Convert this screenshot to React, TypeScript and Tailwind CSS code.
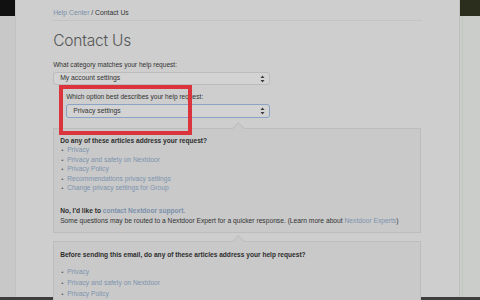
import React from 'react';

const font = { fontFamily: '"Liberation Sans", Arial, sans-serif' };

// Small up/down arrows of a native select
const SelectArrows = () => (
  <svg width="5" height="8" viewBox="0 0 5 8" className="shrink-0">
    <path d="M2.5 0.5 L4.5 3 L0.5 3 Z" fill="#3a3a3a" />
    <path d="M2.5 7.5 L4.5 5 L0.5 5 Z" fill="#3a3a3a" />
  </svg>
);

const Select = ({ value, focused }: { value: string; focused?: boolean }) => (
  <div
    className={`flex items-center justify-between rounded-[3px] bg-[#d3d3d3] pl-[6px] pr-[4px] text-[6.8px] text-[#333] ${
      focused
        ? 'h-[14px] border-[1.5px] border-[#8aa2c4]'
        : 'h-[13px] border border-[#bcbcbc]'
    }`}
  >
    <span>{value}</span>
    <SelectArrows />
  </div>
);

const LinkList = ({ items, gap }: { items: string[]; gap: string }) => (
  <ul className={`flex flex-col ${gap}`}>
    {items.map((item) => (
      <li key={item} className="flex items-center leading-[8px]">
        <span className="w-[7px] pl-[1px] text-[6px] text-[#555]">•</span>
        <span className="text-[#7d93ae]">{item}</span>
      </li>
    ))}
  </ul>
);

// Panel with the little notch pointing up at the select
const Panel = ({ children, className }: { children: React.ReactNode; className?: string }) => (
  <div className={`relative border border-[#bdbdbd] bg-[#c9c9c9] ${className ?? ''}`}>
    <div className="absolute -top-[5px] left-[180px] h-[9px] w-[9px] rotate-45 border-l border-t border-[#bdbdbd] bg-[#c9c9c9]" />
    <div className="relative px-[6px]">{children}</div>
  </div>
);

export default function App() {
  return (
    <div
      className="flex h-[300px] w-[480px] flex-col overflow-hidden bg-[#c9c9c9] text-[#333]"
      style={font}
    >
      <div className="flex min-h-0 flex-1">
        {/* left strip */}
        <div className="flex w-[16px] flex-col bg-[#c8c8c8]">
          <div className="h-[16px] bg-[#111]" />
        </div>

        {/* page */}
        <div className="relative flex-1 border-l border-[#c2c2c2] bg-[#cecece] px-[37px] pt-[8px]">
          <div className="text-[6.8px] leading-[9px]">
            <span className="text-[#7b90aa]">Help Center</span>
            <span className="text-[#333]"> / Contact Us</span>
          </div>
          <div className="mt-[3px] h-px w-[369px] bg-[#c3c3c3]" />

          <h1
            className="mt-[11px] text-[15.5px] font-light leading-[18px] tracking-[-0.2px] text-[#555]"
            style={{ fontFamily: 'Inter, "Liberation Sans", sans-serif' }}
          >
            Contact Us
          </h1>

          <div className="mt-[10px] text-[6.6px] leading-[9px]">
            What category matches your help request:
          </div>
          <div className="mt-[3px] w-[217px]">
            <Select value="My account settings" />
          </div>

          <div className="ml-[13px] mt-[7px] text-[6.6px] leading-[9px]">
            Which option best describes your help request:
          </div>
          <div className="ml-[13px] mt-[3px] w-[204px]">
            <Select value="Privacy settings" focused />
          </div>

          <Panel className="mt-[10px] h-[105px] w-[368px]">
            <div className="pt-[7px] text-[6.7px] leading-[9px]">
              <div className="text-[6.6px] font-bold text-[#2d2d2d]">
                Do any of these articles address your request?
              </div>
              <div className="mt-[1px]">
                <LinkList
                  gap="gap-[1.6px]"
                  items={[
                    'Privacy',
                    'Privacy and safety on Nextdoor',
                    'Privacy Policy',
                    'Recommendations privacy settings',
                    'Change privacy settings for Group',
                  ]}
                />
              </div>
              <div className="mt-[14px] text-[6.6px]">
                <span className="font-bold text-[#2d2d2d]">No, I'd like to </span>
                <span className="font-bold text-[#7b90aa]">contact Nextdoor support.</span>
              </div>
              <div className="mt-[1px] text-[6.7px]">
                Some questions may be routed to a Nextdoor Expert for a quicker response. (Learn more
                about <span className="text-[#7d93ae]">Nextdoor Experts</span>)
              </div>
            </div>
          </Panel>

          <Panel className="mt-[8px] h-[70px] w-[368px]">
            <div className="pt-[8px] text-[6.7px] leading-[9px]">
              <div className="text-[6.6px] font-bold text-[#2d2d2d]">
                Before sending this email, do any of these articles address your help request?
              </div>
              <div className="mt-[9px]">
                <LinkList
                  gap="gap-[3px]"
                  items={['Privacy', 'Privacy and safety on Nextdoor', 'Privacy Policy']}
                />
              </div>
            </div>
          </Panel>

          {/* red annotation box */}
          <div className="pointer-events-none absolute left-[43px] top-[85px] h-[50px] w-[133px] border-[4px] border-[#dc343c]" />
        </div>

        {/* right strip */}
        <div className="flex w-[22px] flex-col border-l border-[#bfbfbf] bg-[#cbcdca]">
          <div className="h-[16px] bg-[#2b2e1c]" />
          <div className="ml-[2px] flex-1 border-l border-[#c2c4c1]" />
        </div>
      </div>
      <div className="h-[3px] bg-[#3e3e3e]" />
    </div>
  );
}
